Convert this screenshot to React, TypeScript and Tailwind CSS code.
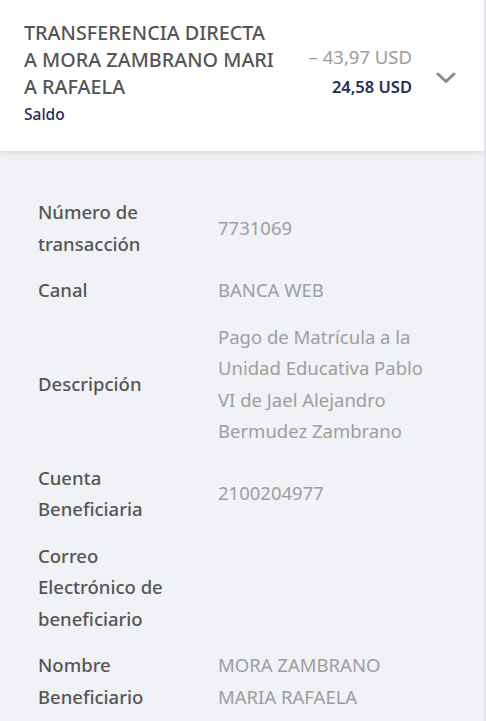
import React from "react";

interface Row {
  label: string[];
  value: string[];
}

const rows: Row[] = [
  { label: ["Número de", "transacción"], value: ["7731069"] },
  { label: ["Canal"], value: ["BANCA WEB"] },
  {
    label: ["Descripción"],
    value: ["Pago de Matrícula a la", "Unidad Educativa Pablo", "VI de Jael Alejandro", "Bermudez Zambrano"],
  },
  { label: ["Cuenta", "Beneficiaria"], value: ["2100204977"] },
  { label: ["Correo", "Electrónico de", "beneficiario"], value: [] },
  { label: ["Nombre", "Beneficiario"], value: ["MORA ZAMBRANO", "MARIA RAFAELA"] },
];

const App = () => {
  return (
    <div
      className="w-[486px] h-[721px] overflow-hidden bg-[#f1f2f6] border-r-2 border-[#e3e4e8] flex flex-col"
      style={{ fontFamily: '"Noto Sans", "Open Sans", sans-serif' }}
    >
      {/* encabezado del movimiento */}
      <div className="relative z-10 bg-white h-[151px] shrink-0 shadow-[0_2px_6px_rgba(0,0,0,0.10)] flex items-start pl-6 pr-7 pt-[19px]">
        <div className="flex-1">
          <div className="text-[19.8px] leading-[27px] text-[#555] font-medium uppercase">
            <div>TRANSFERENCIA DIRECTA</div>
            <div>A MORA ZAMBRANO MARI</div>
            <div>A RAFAELA</div>
          </div>
          <div className="text-[15.5px] leading-[28px] text-[#1f2d5c] font-medium">Saldo</div>
        </div>
        <div className="flex flex-col items-end pt-[23px] mr-[24px]">
          <span className="text-[18.5px] leading-[30px] text-[#9b9b9b]">– 43,97 USD</span>
          <span className="text-[16.5px] leading-[30px] text-[#1f2d5c] font-semibold">24,58 USD</span>
        </div>
        <svg width="20" height="12" viewBox="0 0 20 12" className="mt-[53px] shrink-0">
          <path d="M2 2 L10 9.5 L18 2" fill="none" stroke="#8a8a8a" strokeWidth="3" strokeLinecap="round" strokeLinejoin="round" />
        </svg>
      </div>

      {/* detalle */}
      <div className="flex flex-col gap-[15px] pt-[45px] pl-[38px] pr-6">
        {rows.map((row, i) => (
          <div key={i} className="flex items-center text-[18.5px] leading-[31.5px]">
            <div className="w-[180px] shrink-0 text-[#555] font-medium">
              {row.label.map((l) => (
                <div key={l}>{l}</div>
              ))}
            </div>
            <div className="flex-1 text-[#9e9e9e]">
              {row.value.map((v) => (
                <div key={v}>{v}</div>
              ))}
            </div>
          </div>
        ))}
      </div>
    </div>
  );
};

export default App;
